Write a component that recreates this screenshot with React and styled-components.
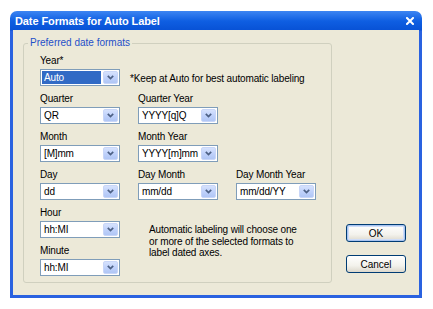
import styled, { createGlobalStyle } from "styled-components";

const GlobalStyle = createGlobalStyle`
  body {
    margin: 0;
    background: #ffffff;
    font-family: "Liberation Sans", Arial, sans-serif;
  }
`;

const Screen = styled.div`
  width: 433px;
  height: 309px;
  padding: 11px 11px 0 10px;
  box-sizing: border-box;
`;

const Window = styled.div`
  display: flex;
  flex-direction: column;
  padding: 0 3px 3px;
  border-radius: 7px 7px 0 0;
  background: linear-gradient(180deg, #3d85f2 0px, #0f5fe2 10px, #0852d6 19px, #2a62e0 20px);
`;

const TitleBar = styled.div`
  height: 19px;
  display: flex;
  align-items: center;
  justify-content: space-between;
  padding: 0 5px 0 2px;
  color: #ffffff;
  font-size: 11px;
  font-weight: 700;
  letter-spacing: -0.1px;
`;

const Body = styled.div`
  height: 265px;
  box-sizing: border-box;
  display: flex;
  padding: 7px 13px 12px 10px;
  background: #ece9d8;
`;

const Group = styled.fieldset`
  width: 309px;
  box-sizing: border-box;
  margin: 0;
  padding: 5px 0 7px 16px;
  border: 1px solid #d0d0bf;
  border-radius: 3px;
`;

const Legend = styled.legend`
  margin-left: -12px;
  padding: 0 2px;
  font-size: 10px;
  line-height: 12px;
  color: #1f4fc9;
`;

const Grid = styled.div`
  display: grid;
  grid-template-columns: 80px 80px 80px;
  grid-template-rows: repeat(6, 32px);
  column-gap: 18px;
  row-gap: 6px;
`;

const Field = styled.div`
  display: flex;
  flex-direction: column;
  gap: 2px;
  grid-column: ${(p) => p.$col};
`;

const Label = styled.div`
  font-size: 10px;
  line-height: 13px;
  color: #000000;
  letter-spacing: -0.15px;
`;

const Select = styled.div`
  height: 17px;
  box-sizing: border-box;
  display: flex;
  align-items: center;
  padding: 1px;
  border: 1px solid #7f9db9;
  background: #ffffff;
`;

const Value = styled.div`
  flex: 1;
  height: 13px;
  margin-right: 2px;
  padding-left: 2px;
  font-size: 10px;
  line-height: 13px;
  letter-spacing: -0.15px;
  color: ${(p) => (p.$selected ? "#ffffff" : "#000000")};
  background: ${(p) => (p.$selected ? "#316ac5" : "transparent")};
`;

const DropButton = styled.div`
  width: 15px;
  height: 13px;
  display: flex;
  align-items: center;
  justify-content: center;
  border-radius: 2px;
  background: linear-gradient(180deg, #d6e2fd 0%, #c0d2fb 50%, #b0c6f5 100%);
  border: 1px solid #c8d6f8;
  box-sizing: border-box;
`;

const Note = styled.div`
  grid-column: ${(p) => p.$col};
  grid-row: ${(p) => p.$row};
  margin-left: ${(p) => p.$indent}px;
  padding-top: ${(p) => p.$top}px;
  font-size: 10px;
  line-height: 11.5px;
  letter-spacing: -0.15px;
  color: #000000;
`;

const Actions = styled.div`
  flex: 1;
  display: flex;
  flex-direction: column;
  align-items: flex-end;
  justify-content: flex-end;
  gap: 13px;
  padding-bottom: 10px;
`;

const Button = styled.button`
  width: 60px;
  height: 18px;
  padding: 0;
  border: 1px solid #003c74;
  border-radius: 3px;
  background: linear-gradient(180deg, #ffffff 0%, #f3f2ec 60%, #dcd8cc 100%);
  box-shadow: ${(p) => (p.$default ? "inset 0 0 0 1px #a8c4f0, inset 0 0 0 2px #cfddf8" : "none")};
  font-family: "Liberation Sans", Arial, sans-serif;
  font-size: 10px;
  color: #000000;
`;

function Chevron() {
  return (
    <svg width="7" height="5" viewBox="0 0 7 5">
      <polyline points="0.8,0.8 3.5,3.6 6.2,0.8" fill="none" stroke="#4d6185" strokeWidth="1.7" />
    </svg>
  );
}

function CloseIcon() {
  return (
    <svg width="8" height="8" viewBox="0 0 8 8">
      <path d="M1 1 L7 7 M7 1 L1 7" stroke="#ffffff" strokeWidth="2" strokeLinecap="square" />
    </svg>
  );
}

function Combo({ label, value, col, selected }) {
  return (
    <Field $col={col}>
      <Label>{label}</Label>
      <Select>
        <Value $selected={selected}>{value}</Value>
        <DropButton>
          <Chevron />
        </DropButton>
      </Select>
    </Field>
  );
}

export default function App() {
  return (
    <Screen>
      <GlobalStyle />
      <Window>
        <TitleBar>
          <span>Date Formats for Auto Label</span>
          <CloseIcon />
        </TitleBar>
        <Body>
          <Group>
            <Legend>Preferred date formats</Legend>
            <Grid>
              <Combo label="Year*" value="Auto" col="1" selected />
              <Note $col="2 / 4" $row="1" $indent={-8} $top={19}>
                *Keep at Auto for best automatic labeling
              </Note>
              <Combo label="Quarter" value="QR" col="1" />
              <Combo label="Quarter Year" value="YYYY[q]Q" col="2" />
              <Combo label="Month" value="[M]mm" col="1" />
              <Combo label="Month Year" value="YYYY[m]mm" col="2" />
              <Combo label="Day" value="dd" col="1" />
              <Combo label="Day Month" value="mm/dd" col="2" />
              <Combo label="Day Month Year" value="mm/dd/YY" col="3" />
              <Combo label="Hour" value="hh:MI" col="1" />
              <Note $col="2 / 4" $row="5 / 7" $indent={11} $top={18}>
                Automatic labeling will choose one
                <br />
                or more of the selected formats to
                <br />
                label dated axes.
              </Note>
              <Combo label="Minute" value="hh:MI" col="1" />
            </Grid>
          </Group>
          <Actions>
            <Button $default>OK</Button>
            <Button>Cancel</Button>
          </Actions>
        </Body>
      </Window>
    </Screen>
  );
}
